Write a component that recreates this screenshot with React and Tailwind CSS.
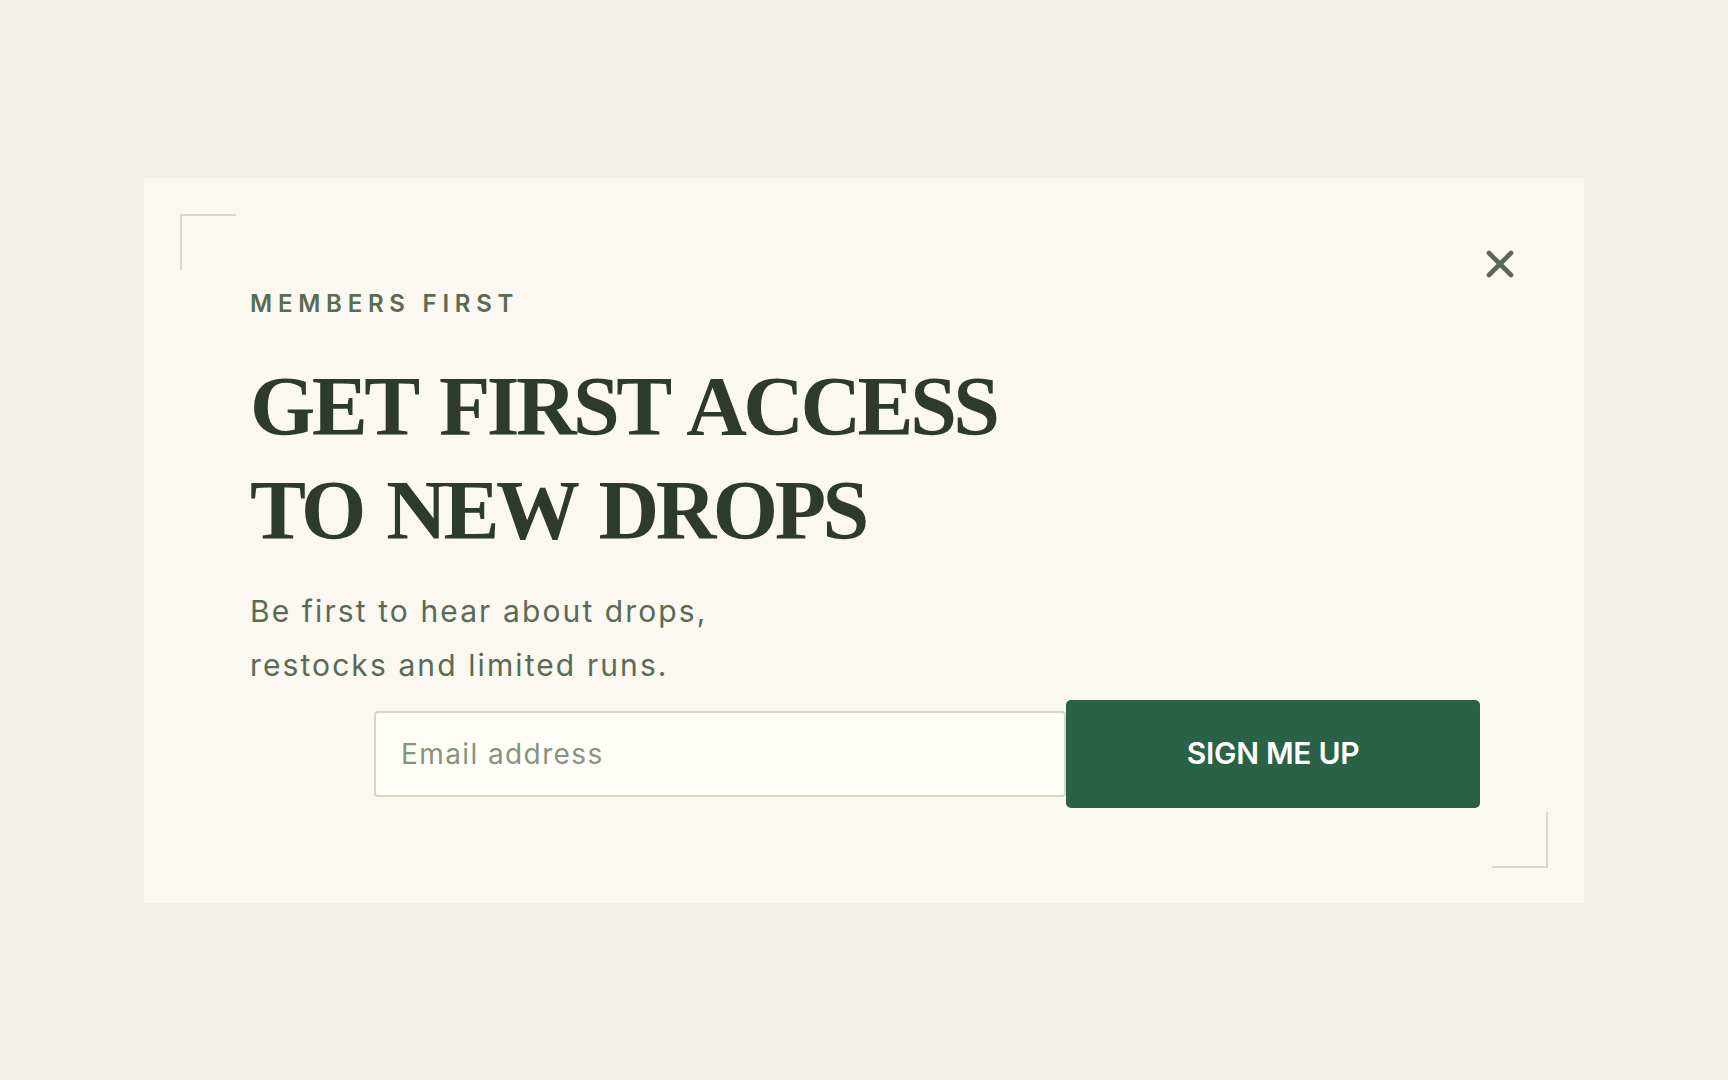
import React from "react";

export default function App() {
  return (
    <div className="min-h-screen w-full bg-[#f0efea] flex items-center justify-center">
      <div className="relative w-[1440px] bg-[#faf8f0] pt-[110px] pb-[95px] pl-[106px] pr-[104px] font-['Inter',sans-serif]">
        {/* corner brackets */}
        <div className="absolute left-[36px] top-[36px] w-[56px] h-[56px] border-l-2 border-t-2 border-[#d7d8c6]" />
        <div className="absolute right-[36px] bottom-[35px] w-[56px] h-[56px] border-r-2 border-b-2 border-[#d7d8c6]" />
        {/* close */}
        <button className="absolute right-[70px] top-[72px] w-[28px] h-[28px] text-[#5c665a]" aria-label="Close">
          <svg viewBox="0 0 28 28" width="28" height="28" fill="none" stroke="currentColor" strokeWidth="4.6" strokeLinecap="round">
            <path d="M3 3 L25 25 M25 3 L3 25" />
          </svg>
        </button>

        <p className="text-[24px] leading-[32px] font-semibold tracking-[0.24em] text-[#5b6a53]">MEMBERS FIRST</p>

        <h1 className="mt-[35px] font-['Liberation_Serif',serif] font-bold text-[84px] leading-[104px] tracking-[-3.5px] [word-spacing:6px] text-[#2d3a2c]">
          GET FIRST ACCESS
          <br />
          TO NEW DROPS
        </h1>

        <p className="mt-[21px] text-[30px] leading-[54px] tracking-[2.1px] text-[#5b6a54]">
          Be first to hear about drops,
          <br />
          restocks and limited runs.
        </p>

        <form className="mt-[8px] flex items-center justify-end" onSubmit={(e) => e.preventDefault()}>
          <input
            type="email"
            placeholder="Email address"
            className="w-[692px] h-[86px] rounded-[4px] border-2 border-[#d6d8c6] bg-[#fefdf7] pl-[25px] text-[28px] tracking-[1.4px] text-[#2d3a2c] placeholder:text-[#88937f] outline-none"
          />
          <button
            type="submit"
            className="w-[414px] h-[108px] rounded-[5px] bg-[#2a6248] text-white text-[30px] font-semibold tracking-[-0.3px]"
          >
            SIGN ME UP
          </button>
        </form>
      </div>
    </div>
  );
}
